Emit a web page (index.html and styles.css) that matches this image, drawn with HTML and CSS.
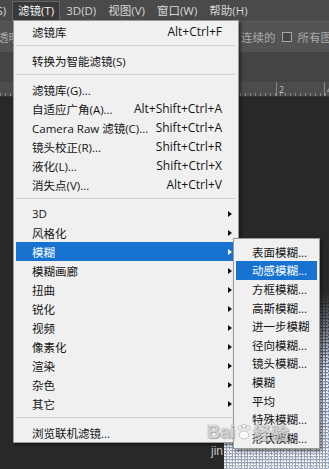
FILE: index.html
```html
<!DOCTYPE html>
<html lang="zh-CN">
<head>
    <meta charset="UTF-8">
    <meta name="viewport" content="width=device-width, initial-scale=1.0">
    <title>滤镜 - 模糊</title>
    <link rel="stylesheet" href="styles.css">
</head>
<body>

    <header class="menubar">
        <span class="mb-item cut">(S)</span>
        <span class="mb-item active">滤镜(T)</span>
        <span class="mb-item">3D(D)</span>
        <span class="mb-item">视图(V)</span>
        <span class="mb-item">窗口(W)</span>
        <span class="mb-item">帮助(H)</span>
    </header>

    <div class="optbar">
        <span class="opt-left">透明</span>
        <span class="opt-right">连续的 <i class="chk"></i> 所有图层</span>
    </div>
    <div class="tabbar"></div>
    <div class="ruler">
        <span class="tick t2">2</span>
        <span class="tick t4">4</span>
    </div>

    <div class="workspace">
        <div class="noise"></div>
        <span class="url">jin</span>
    </div>

    <!-- 滤镜 menu -->
    <div class="menu">
        <div class="row">滤镜库<span class="key">Alt+Ctrl+F</span></div>
        <div class="sep"></div>
        <div class="row">转换为智能滤镜(S)</div>
        <div class="sep"></div>
        <div class="row">滤镜库(G)...</div>
        <div class="row">自适应广角(A)...<span class="key">Alt+Shift+Ctrl+A</span></div>
        <div class="row">Camera Raw 滤镜(C)...<span class="key">Shift+Ctrl+A</span></div>
        <div class="row">镜头校正(R)...<span class="key">Shift+Ctrl+R</span></div>
        <div class="row">液化(L)...<span class="key">Shift+Ctrl+X</span></div>
        <div class="row">消失点(V)...<span class="key">Alt+Ctrl+V</span></div>
        <div class="sep"></div>
        <div class="row">3D<i class="arr"></i></div>
        <div class="row">风格化<i class="arr"></i></div>
        <div class="row on">模糊<i class="arr"></i></div>
        <div class="row">模糊画廊<i class="arr"></i></div>
        <div class="row">扭曲<i class="arr"></i></div>
        <div class="row">锐化<i class="arr"></i></div>
        <div class="row">视频<i class="arr"></i></div>
        <div class="row">像素化<i class="arr"></i></div>
        <div class="row">渲染<i class="arr"></i></div>
        <div class="row">杂色<i class="arr"></i></div>
        <div class="row">其它<i class="arr"></i></div>
        <div class="sep"></div>
        <div class="row">浏览联机滤镜...</div>
    </div>

    <!-- 模糊 submenu -->
    <div class="submenu">
        <div class="row">表面模糊...</div>
        <div class="row on">动感模糊...</div>
        <div class="row">方框模糊...</div>
        <div class="row">高斯模糊...</div>
        <div class="row">进一步模糊</div>
        <div class="row">径向模糊...</div>
        <div class="row">镜头模糊...</div>
        <div class="row">模糊</div>
        <div class="row">平均</div>
        <div class="row">特殊模糊...</div>
        <div class="row">形状模糊...</div>
    </div>

    <div class="watermark">Bai<svg class="paw" width="14" height="16" viewBox="0 0 14 16"><circle cx="3" cy="4" r="2"/><circle cx="7" cy="2" r="2"/><circle cx="11" cy="4" r="2"/><ellipse cx="7" cy="11" rx="5" ry="4"/></svg>经验</div>

</body>
</html>
```

FILE: styles.css
```css
* {
    margin: 0;
    padding: 0;
    box-sizing: border-box;
}

body {
    width: 329px;
    height: 469px;
    overflow: hidden;
    position: relative;
    background: #282828;
    font-family: "Open Sans", "Noto Sans CJK SC", sans-serif;
    font-size: 11.5px;
}

/* top bars */
.menubar {
    height: 22px;
    display: flex;
    align-items: center;
    background: #4a4a4a;
    border-bottom: 1px solid #5a5a5a;
    color: #d6d6d6;
    white-space: nowrap;
}

.mb-item {
    padding: 0 5px;
    line-height: 18px;
    border: 1px solid transparent;
}

.mb-item.cut {
    margin-left: -13px;
}

.mb-item.active {
    background: #393939;
    border-color: #666;
    color: #f2f2f2;
}

.optbar {
    height: 30px;
    display: flex;
    align-items: center;
    background: #535353;
    color: #aaa;
    white-space: nowrap;
    overflow: hidden;
}

.opt-left {
    width: 244px;
    margin-left: -3px;
    flex-shrink: 0;
}

.opt-right {
    display: flex;
    align-items: center;
    gap: 6px;
}

.chk {
    width: 10px;
    height: 10px;
    border: 1px solid #a8a8a8;
    background: #454545;
}

.tabbar {
    height: 30px;
    background: #444;
}

.ruler {
    height: 15px;
    position: relative;
    background:
        repeating-linear-gradient(to right, #8a8a8a 0 1px, transparent 1px 5px) 0 100% / 100% 3px no-repeat,
        #4c4c4c;
    border-bottom: 1px solid #333;
    color: #bdbdbd;
    font-size: 9px;
}

.tick {
    position: absolute;
    top: 0;
    height: 14px;
    padding-left: 2px;
    line-height: 16px;
    border-left: 1px solid #8a8a8a;
}

.t2 { left: 276px; }
.t4 { left: 324px; }

/* workspace picture */
.workspace {
    position: relative;
    height: 372px;
}

.noise {
    position: absolute;
    left: 224px;
    top: 195px;
    right: 0;
    bottom: 0;
    background:
        radial-gradient(circle at 30% 40%, rgba(255, 255, 255, 0.95) 0 0.7px, transparent 1.2px) 0 0 / 3px 3px,
        radial-gradient(circle at 70% 30%, rgba(210, 225, 255, 0.8) 0 0.7px, transparent 1.2px) 1px 0 / 5px 4px,
        radial-gradient(circle at 50% 50%, rgba(255, 255, 255, 0.7) 0 0.6px, transparent 1.1px) 2px 1px / 7px 5px,
        linear-gradient(#40506b, #72839f 55%, #9aa3b2);
    -webkit-mask-image: linear-gradient(to bottom, transparent 0, #000 80px);
    mask-image: linear-gradient(to bottom, transparent 0, #000 80px);
}

.url {
    position: absolute;
    left: 211px;
    top: 347px;
    color: #c4c4c4;
    font-family: "Liberation Sans", sans-serif;
    font-size: 12px;
}

/* menus */
.menu,
.submenu {
    position: absolute;
    background: #f0f0f0;
    border: 1px solid #9a9a9a;
    box-shadow: 2px 2px 3px rgba(0, 0, 0, 0.45);
    color: #141414;
    white-space: nowrap;
}

.menu {
    left: 13px;
    top: 20px;
    width: 226px;
    padding: 1px 5px 0 2px;
}

.row {
    height: 19px;
    display: flex;
    align-items: center;
    justify-content: space-between;
    padding: 0 11px 0 16px;
}

.row.on {
    background: #1773cf;
    color: #fff;
}

.key {
    font-family: "Open Sans", sans-serif;
    font-size: 12px;
}

.arr {
    width: 0;
    height: 0;
    margin-right: -10px;
    border-left: 4px solid #111;
    border-top: 3.5px solid transparent;
    border-bottom: 3.5px solid transparent;
}

.row.on .arr {
    border-left-color: #fff;
}

.sep {
    height: 1px;
    margin: 4px -2px 5px 0;
    background: #d2d2d2;
}

.submenu {
    left: 233px;
    top: 238px;
    width: 87px;
    padding: 3.5px 2px 1px;
}

.submenu .row {
    height: 18.6px;
    padding: 0 0 0 16px;
}

/* burned-in watermark */
.watermark {
    position: absolute;
    left: 207px;
    top: 419px;
    display: flex;
    align-items: center;
    gap: 2px;
    color: rgba(255, 255, 255, 0.7);
    text-shadow: 0 0 1px rgba(70, 70, 70, 0.7), 1px 1px 1px rgba(0, 0, 0, 0.25);
    font-family: "Liberation Sans", "Noto Sans CJK SC", sans-serif;
    font-size: 18px;
    font-weight: bold;
}

.paw {
    fill: rgba(255, 255, 255, 0.6);
    stroke: rgba(90, 90, 90, 0.4);
    stroke-width: 0.8;
}
```
